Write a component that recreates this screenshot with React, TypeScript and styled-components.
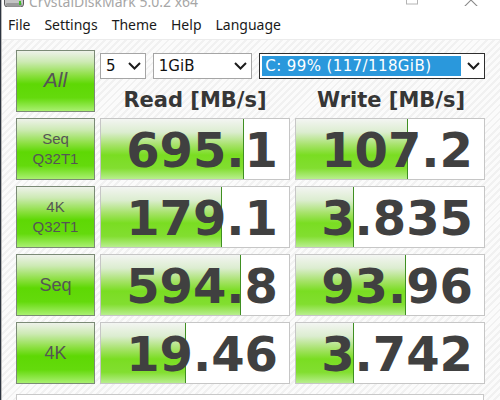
import React from 'react'
import styled, { createGlobalStyle } from 'styled-components'

type Result = { label: string[]; read: number; write: number }

const results: Result[] = [
  { label: ['Seq', 'Q32T1'], read: 695.1, write: 107.2 },
  { label: ['4K', 'Q32T1'], read: 179.1, write: 3.835 },
  { label: ['Seq'], read: 594.8, write: 93.96 },
  { label: ['4K'], read: 19.46, write: 3.742 },
]

// meter length on a log scale, same curve the app uses
const meter = (score: number) => Math.max(0, Math.min(1, (Math.log10(score) + 0.96) / 5))

const format = (score: number) => {
  if (score >= 100) return score.toFixed(1)
  if (score >= 10) return score.toFixed(2)
  return score.toFixed(3)
}

const GlobalStyle = createGlobalStyle`
  html, body {
    margin: 0;
    padding: 0;
    background: #2c3440;
    overflow: hidden;
  }
`

export default function App() {
  return (
    <>
      <GlobalStyle />
      <Desktop>
        <Window>
          <TitleBar>
            <AppIcon width="20" height="8" viewBox="0 0 20 8">
              <rect x="0.5" y="-6" width="19" height="13" rx="3" fill="#c4c4c4" stroke="#5a5a5a" />
              <rect x="2" y="3" width="16" height="3" rx="1" fill="#9a9a9a" />
              <rect x="15" y="1" width="2" height="4" fill="#3fbf2a" />
            </AppIcon>
            <Title>CrystalDiskMark 5.0.2 x64</Title>
            <Spacer />
            <MaxBox width="12" height="5" viewBox="0 0 12 5">
              <rect x="0.5" y="-8" width="11" height="12" fill="none" stroke="#b4b4b4" />
            </MaxBox>
            <CloseBox width="14" height="6" viewBox="0 0 14 6">
              <path d="M0 -7 L14 7 M14 -7 L0 7" stroke="#8a8a8a" strokeWidth="1.1" fill="none" />
            </CloseBox>
          </TitleBar>

          <MenuBar>
            {['File', 'Settings', 'Theme', 'Help', 'Language'].map((m) => (
              <MenuItem key={m}>{m}</MenuItem>
            ))}
          </MenuBar>

          <Body>
            <Grid>
              <TestButton $big>
                <Label $size={21} $italic>
                  All
                </Label>
              </TestButton>

              <TopPanel>
                <Selects>
                  <Select $width={46}>
                    <SelectText>5</SelectText>
                    <Chevron />
                  </Select>
                  <Select $width={100}>
                    <SelectText>1GiB</SelectText>
                    <Chevron />
                  </Select>
                  <Select $width={227} $dark>
                    <Selected>C: 99% (117/118GiB)</Selected>
                    <Chevron />
                  </Select>
                </Selects>
                <Headers>
                  <Header>Read [MB/s]</Header>
                  <Header>Write [MB/s]</Header>
                </Headers>
              </TopPanel>

              {results.map((r) => (
                <React.Fragment key={r.label.join(' ')}>
                  <TestButton>
                    {r.label.map((line) => (
                      <Label key={line} $size={r.label.length > 1 ? 15 : 18}>
                        {line}
                      </Label>
                    ))}
                  </TestButton>
                  <ScoreCell>
                    <Bar style={{ width: `${meter(r.read) * 100}%` }} />
                    <Score>{format(r.read)}</Score>
                  </ScoreCell>
                  <ScoreCell>
                    <Bar style={{ width: `${meter(r.write) * 100}%` }} />
                    <Score>{format(r.write)}</Score>
                  </ScoreCell>
                </React.Fragment>
              ))}
            </Grid>
            <Comment />
          </Body>
        </Window>
      </Desktop>
    </>
  )
}

function Chevron() {
  return (
    <ChevronIcon width="13" height="8" viewBox="0 0 13 8">
      <polyline points="1,1 6.5,6.5 12,1" fill="none" stroke="#1c1c1c" strokeWidth="2" />
    </ChevronIcon>
  )
}

const Desktop = styled.div`
  width: 500px;
  height: 400px;
  padding-left: 1px;
  box-sizing: border-box;
`

const Window = styled.div`
  height: 400px;
  background: #ffffff;
  border-left: 1px solid #b9b9b9;
  display: flex;
  flex-direction: column;
  overflow: hidden;
`

const TitleBar = styled.div`
  flex-shrink: 0;
  height: 7px;
  display: flex;
  align-items: flex-end;
  overflow: hidden;
  padding-left: 2px;
`

const AppIcon = styled.svg`
  flex-shrink: 0;
  align-self: flex-start;
`

const Title = styled.span`
  margin-left: 5px;
  font-family: 'Noto Sans', sans-serif;
  font-size: 14px;
  line-height: 14px;
  color: #a6a6a6;
  white-space: nowrap;
  margin-bottom: -2px;
`

const Spacer = styled.div`
  flex: 1;
`

const MaxBox = styled.svg`
  align-self: flex-start;
  flex-shrink: 0;
`

const CloseBox = styled.svg`
  align-self: flex-start;
  flex-shrink: 0;
  margin-left: 46px;
  margin-right: 22px;
`

const MenuBar = styled.div`
  flex-shrink: 0;
  height: 32px;
  display: flex;
  align-items: center;
  gap: 14px;
  padding: 2px 0 0 6px;
  box-sizing: border-box;
  font-family: 'Noto Sans', sans-serif;
  font-size: 14px;
  color: #1a1a1a;
`

const MenuItem = styled.span`
  white-space: nowrap;
`

const Body = styled.div`
  flex: 1;
  min-height: 0;
  overflow: hidden;
  border-top: 1px solid #ececec;
  padding: 10px 0 0 14px;
  background: repeating-linear-gradient(-45deg, #fbfbfb 0px, #fbfbfb 3px, #f1f1f1 3px, #f1f1f1 5px);
`

const Grid = styled.div`
  display: grid;
  grid-template-columns: 79px 190px 190px;
  grid-auto-rows: 62px;
  column-gap: 5px;
  row-gap: 6px;
`

const TestButton = styled.div<{ $big?: boolean }>`
  box-sizing: border-box;
  border: 1px solid #7b8a76;
  background: linear-gradient(
    to bottom,
    #eef2ea 0%,
    #cdeab4 18%,
    #8ee044 40%,
    #5ed804 55%,
    #64da0c 78%,
    #a9f070 100%
  );
  display: flex;
  flex-direction: column;
  align-items: center;
  justify-content: center;
  padding-bottom: ${(p) => (p.$big ? '2px' : '0')};
`

const Label = styled.span<{ $size: number; $italic?: boolean }>`
  font-family: 'Liberation Sans', Arial, sans-serif;
  font-size: ${(p) => p.$size}px;
  font-style: ${(p) => (p.$italic ? 'italic' : 'normal')};
  line-height: ${(p) => (p.$size > 16 ? 24 : 20)}px;
  color: #555555;
`

const TopPanel = styled.div`
  grid-column: 2 / span 2;
  display: flex;
  flex-direction: column;
  padding-top: 3px;
`

const Selects = styled.div`
  display: flex;
  gap: 7px;
  height: 26px;
`

const Select = styled.div<{ $width: number; $dark?: boolean }>`
  box-sizing: border-box;
  width: ${(p) => p.$width}px;
  height: 26px;
  background: #ffffff;
  border: 1px solid ${(p) => (p.$dark ? '#2e2e2e' : '#a5a5a5')};
  display: flex;
  align-items: center;
  padding: ${(p) => (p.$dark ? '0 4px 0 2px' : '0 4px 0 5px')};
  gap: 4px;
`

const SelectText = styled.span`
  flex: 1;
  font-family: 'DejaVu Sans', Verdana, sans-serif;
  font-size: 15px;
  color: #111111;
`

const Selected = styled.span`
  flex: 1;
  align-self: stretch;
  margin: 2px 0;
  padding-left: 3px;
  display: flex;
  align-items: center;
  background: #2a98dc;
  color: #ffffff;
  font-family: 'DejaVu Sans', Verdana, sans-serif;
  font-size: 15px;
  letter-spacing: 0.4px;
  white-space: nowrap;
`

const ChevronIcon = styled.svg`
  flex-shrink: 0;
  margin-left: 2px;
`

const Headers = styled.div`
  display: grid;
  grid-template-columns: 190px 190px;
  column-gap: 6px;
  margin-top: 9px;
`

const Header = styled.div`
  text-align: center;
  font-family: 'DejaVu Sans', Verdana, sans-serif;
  font-weight: bold;
  font-size: 21px;
  line-height: 24px;
  color: #363636;
  white-space: nowrap;
`

const ScoreCell = styled.div`
  position: relative;
  box-sizing: border-box;
  border: 1px solid #c6c6c6;
  background: #ffffff;
  display: flex;
  align-items: center;
  justify-content: flex-end;
  padding-right: 11px;
  overflow: hidden;
`

// meter fill sits under the number
const Bar = styled.div`
  position: absolute;
  left: 0;
  top: 0;
  bottom: 0;
  box-sizing: border-box;
  border-right: 1px solid #3f8f22;
  background: linear-gradient(
    to bottom,
    #f3f5f2 0%,
    #dcedd0 22%,
    #a4e266 44%,
    #7add22 60%,
    #82de30 82%,
    #b8ee8e 100%
  );
`

const Score = styled.span`
  position: relative;
  font-family: 'DejaVu Sans', Verdana, sans-serif;
  font-weight: bold;
  font-size: 48px;
  line-height: 56px;
  color: #404040;
  margin-top: 2px;
`

const Comment = styled.div`
  width: 468px;
  height: 20px;
  margin-top: 10px;
  box-sizing: border-box;
  background: #ffffff;
  border: 1px solid #c8c8c8;
`
